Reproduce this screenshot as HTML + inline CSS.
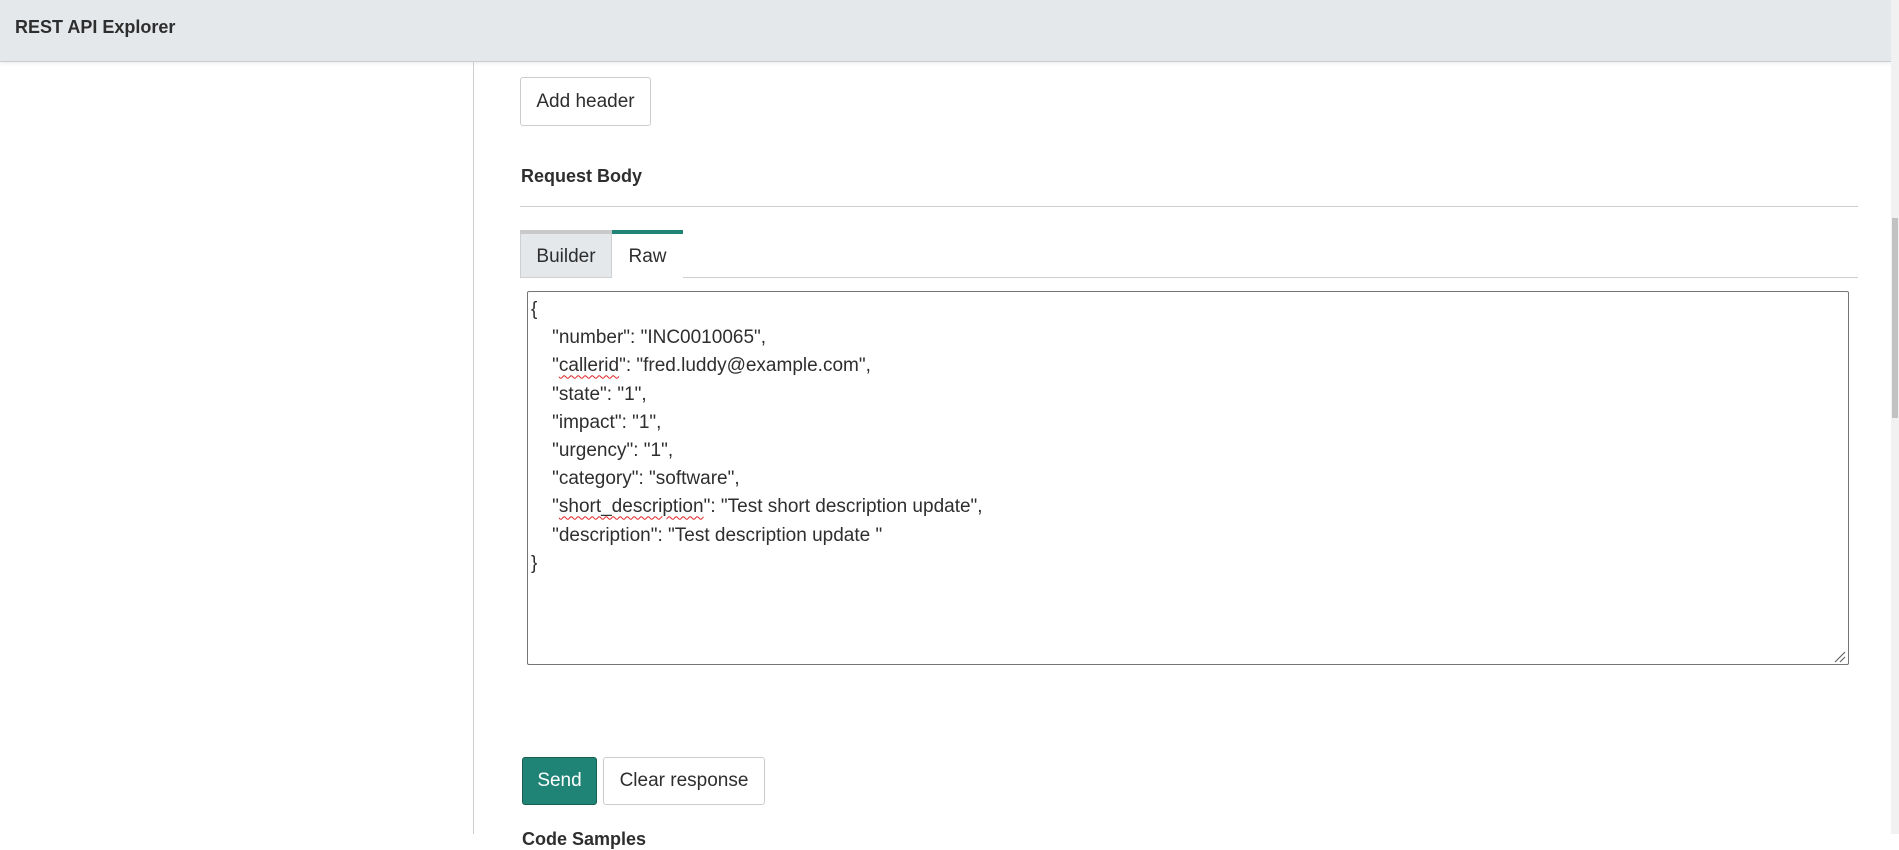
<!DOCTYPE html>
<html><head><meta charset="utf-8"><style>
*{box-sizing:border-box;margin:0;padding:0}
body{width:1899px;height:834px;overflow:hidden;background:#fff;font-family:"Liberation Sans",Arial,sans-serif;color:#2e2e2e;position:relative}
.hdr{position:absolute;left:0;top:0;width:1891px;height:62px;background:#e4e8eb;border-bottom:1px solid #c9cccf;box-shadow:0 2px 3px rgba(0,0,0,.06)}
.hdr span{position:absolute;left:15px;top:17px;font-size:18px;font-weight:bold;color:#2e2e2e}
.side{position:absolute;left:473px;top:62px;width:1px;height:772px;background:#cfcfcf}
.btn{position:absolute;border:1px solid #ccc;border-radius:3px;background:#fff;font-size:19px;color:#2e2e2e;text-align:center}
.h{position:absolute;left:521px;top:166px;font-size:18px;font-weight:bold;color:#2e2e2e}
.line{position:absolute;height:1px;background:#cfcfcf}
.tab{position:absolute;top:230px;height:47px;font-size:19px;line-height:42px;text-align:center;padding-top:2px}
.ta{position:absolute;left:527px;top:291px;width:1322px;height:374px;border:1px solid #767676;border-radius:2px;font-size:19px;line-height:28.2px;padding:4px 0 0 3px;white-space:pre;color:#2e2e2e}
.sq{text-decoration:underline wavy #e02020;text-decoration-thickness:1px;text-underline-offset:3px}
.sb{position:absolute;left:1891px;top:0;width:8px;height:834px;background:#f1f1f1}
.sb div{position:absolute;left:1px;top:218px;width:6px;height:200px;background:#c1c1c1}
</style></head><body>
<div class="hdr"><span>REST API Explorer</span></div>
<div class="side"></div>
<div class="btn" style="left:520px;top:77px;width:131px;height:49px;line-height:47px">Add header</div>
<div class="h">Request Body</div>
<div class="line" style="left:520px;top:206px;width:1338px"></div>
<div class="line" style="left:520px;top:277px;width:1338px"></div>
<div class="tab" style="left:520px;width:92px;background:#e4e8eb;border:1px solid #cfcfcf;border-top:4px solid #c9c9c9;border-bottom:none">Builder</div>
<div class="tab" style="left:612px;width:71px;background:#fff;border-top:4px solid #1f8476;height:48px">Raw</div>
<div class="ta">{
    "number": "INC0010065",
    "<span class="sq">callerid</span>": "fred.luddy@example.com",
    "state": "1",
    "impact": "1",
    "urgency": "1",
    "category": "software",
    "<span class="sq">short_description</span>": "Test short description update",
    "description": "Test description update "
}</div>
<svg style="position:absolute;left:1834px;top:651px" width="12" height="12"><path d="M1 11L11 1M6 11L11 6" stroke="#666" stroke-width="1.2"/></svg>
<div class="btn" style="left:522px;top:757px;width:75px;height:48px;line-height:46px;background:#1f8476;border-color:#17604f;color:#fff">Send</div>
<div class="btn" style="left:603px;top:757px;width:162px;height:48px;line-height:46px">Clear response</div>
<div style="position:absolute;left:522px;top:829px;font-size:18px;font-weight:bold">Code Samples</div>
<div class="sb"><div></div></div>
</body></html>
